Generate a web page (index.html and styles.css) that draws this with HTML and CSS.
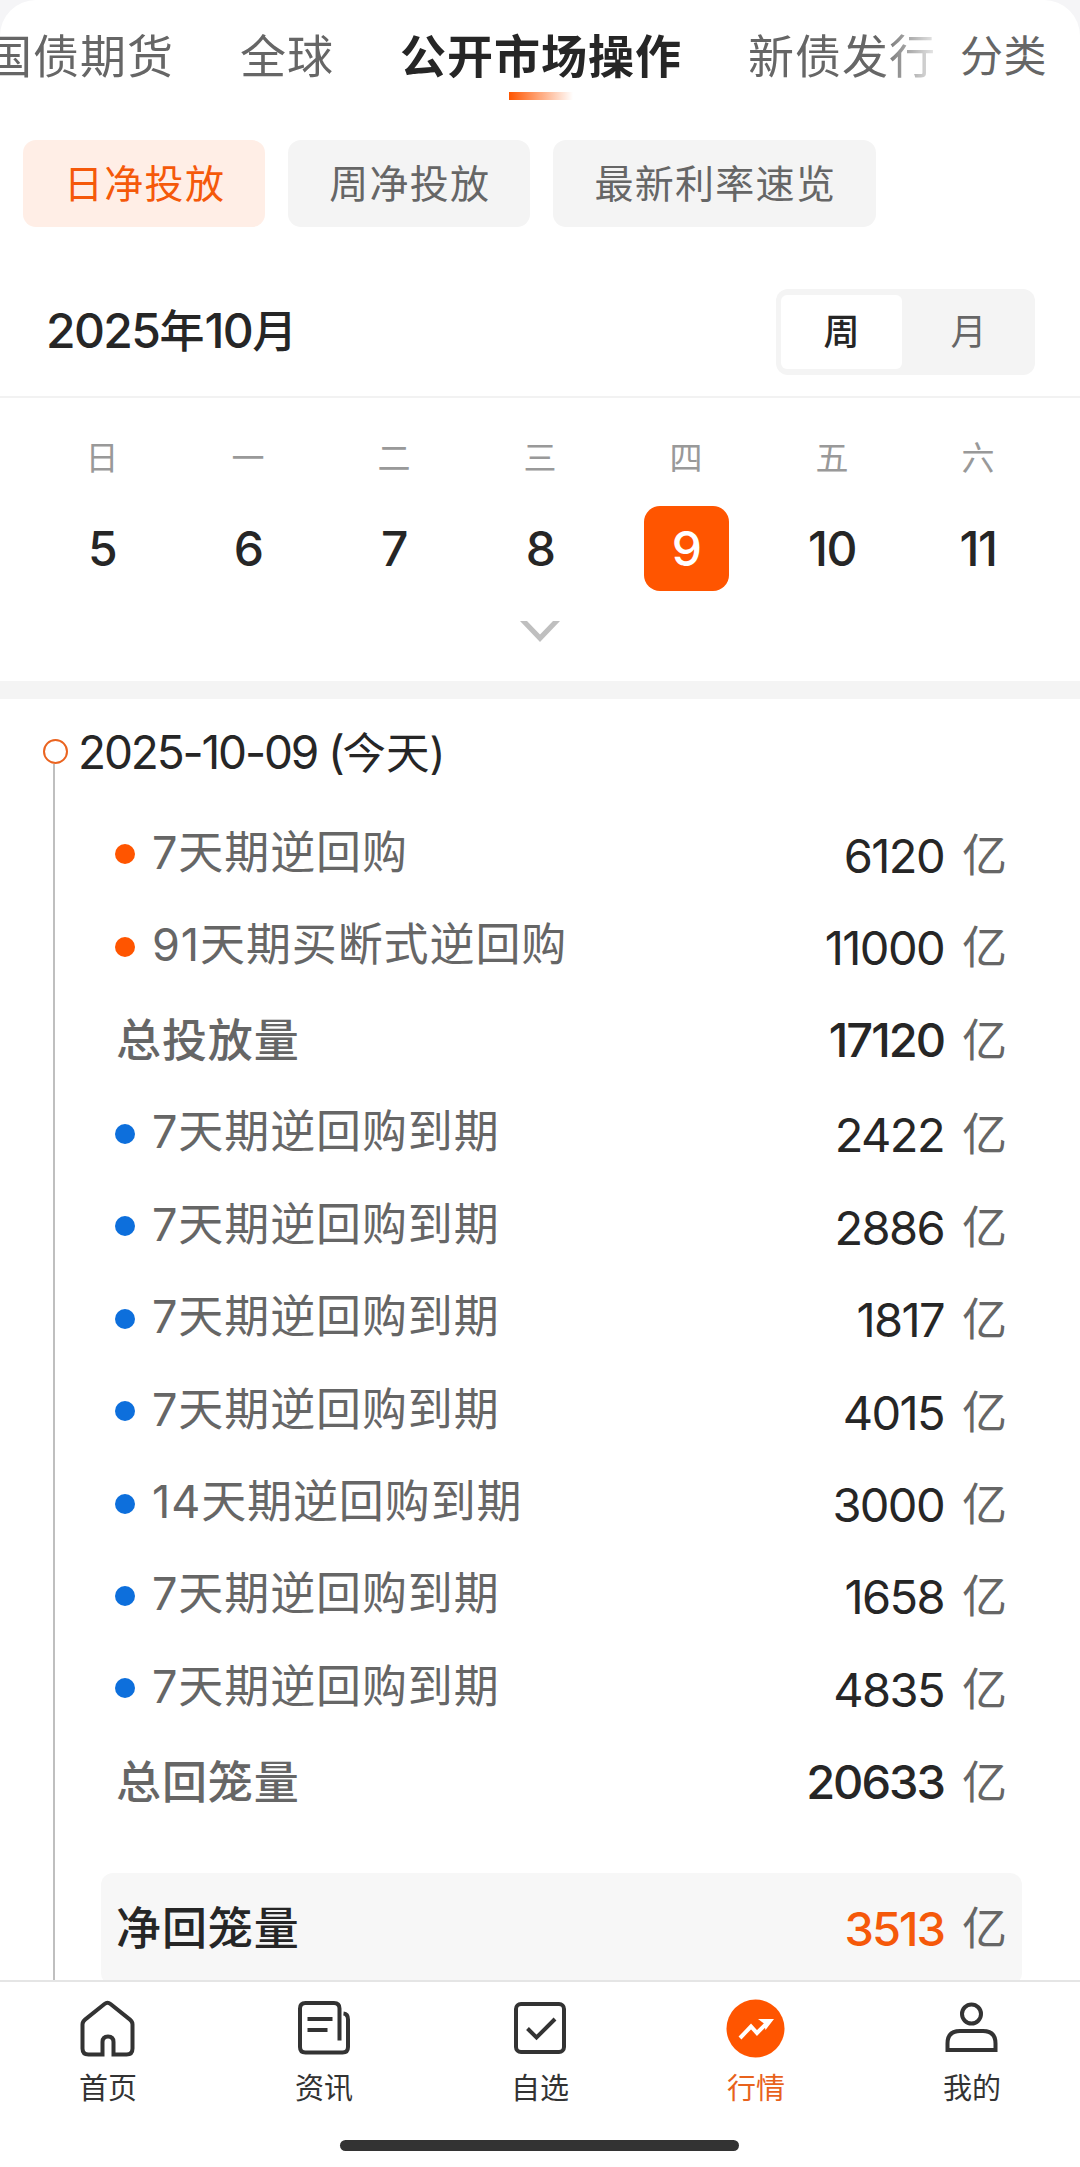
FILE: index.html
```html
<!DOCTYPE html>
<html lang="zh-CN">
<head>
<meta charset="utf-8">
<title>公开市场操作</title>
<link rel="stylesheet" href="styles.css">
</head>
<body>
<div class="app">
  <header class="tabs">
    <nav class="tabs-scroll">
      <span class="tab">国债期货</span>
      <span class="tab">全球</span>
      <span class="tab tab-active">公开市场操作</span>
      <span class="tab">新债发行</span>
    </nav>
    <span class="tab-category">分类</span>
  </header>

  <div class="chips">
    <span class="chip chip-active">日净投放</span>
    <span class="chip">周净投放</span>
    <span class="chip">最新利率速览</span>
  </div>

  <section class="calendar">
    <div class="cal-head">
      <h1 class="cal-title"><span class="n">2025</span>年<span class="n">10</span>月</h1>
      <div class="toggle"><span class="toggle-item toggle-on">周</span><span class="toggle-item">月</span></div>
    </div>
    <div class="week">
      <span class="wd">日</span><span class="wd">一</span><span class="wd">二</span><span class="wd">三</span><span class="wd">四</span><span class="wd">五</span><span class="wd">六</span>
      <span class="day">5</span><span class="day">6</span><span class="day">7</span><span class="day">8</span><span class="day day-on">9</span><span class="day">10</span><span class="day">11</span>
    </div>
    <svg class="chevron" viewBox="0 0 40 22"><path d="M0 0H7L20 13.500 33 0H40L20 21z" fill="#bfbfbf"/></svg>
  </section>

  <main class="timeline">
    <div class="rail"><i class="rail-dot"></i><i class="rail-line"></i></div>
    <div class="entry">
      <h2 class="date"><span class="n">2025-10-09 (</span>今天)</h2>
      <ul class="list">
        <li class="row"><i class="dot"></i><span class="label">7天期逆回购</span><b class="amount">6120</b><span class="unit">亿</span></li>
        <li class="row"><i class="dot"></i><span class="label">91天期买断式逆回购</span><b class="amount">11000</b><span class="unit">亿</span></li>
        <li class="row total"><span class="label">总投放量</span><b class="amount">17120</b><span class="unit">亿</span></li>
        <li class="row due"><i class="dot"></i><span class="label">7天期逆回购到期</span><b class="amount">2422</b><span class="unit">亿</span></li>
        <li class="row due"><i class="dot"></i><span class="label">7天期逆回购到期</span><b class="amount">2886</b><span class="unit">亿</span></li>
        <li class="row due"><i class="dot"></i><span class="label">7天期逆回购到期</span><b class="amount">1817</b><span class="unit">亿</span></li>
        <li class="row due"><i class="dot"></i><span class="label">7天期逆回购到期</span><b class="amount">4015</b><span class="unit">亿</span></li>
        <li class="row due"><i class="dot"></i><span class="label">14天期逆回购到期</span><b class="amount">3000</b><span class="unit">亿</span></li>
        <li class="row due"><i class="dot"></i><span class="label">7天期逆回购到期</span><b class="amount">1658</b><span class="unit">亿</span></li>
        <li class="row due"><i class="dot"></i><span class="label">7天期逆回购到期</span><b class="amount">4835</b><span class="unit">亿</span></li>
        <li class="row total"><span class="label">总回笼量</span><b class="amount">20633</b><span class="unit">亿</span></li>
        <li class="row total net"><span class="label">净回笼量</span><b class="amount">3513</b><span class="unit">亿</span></li>
      </ul>
    </div>
  </main>

  <footer class="bottom">
    <nav class="nav">
      <a class="nav-item">
        <svg class="icon" viewBox="0 0 60 60" fill="none" stroke="#333" stroke-width="4"><path d="M26.500 5Q29.500 2.500 32.500 5L52 20.600Q54.500 22.600 54.500 25.500V49.500Q54.500 55.500 48.500 55.500H35.500V43Q35.500 37.500 30 37.500T24.500 43V55.500H10.500Q4.500 55.500 4.500 49.500V25.500Q4.500 22.600 7 20.600Z"/></svg>
        <span>首页</span>
      </a>
      <a class="nav-item">
        <svg class="icon" viewBox="0 0 60 60" fill="none" stroke="#333" stroke-width="4"><path d="M45.500 41.500V9.500Q45.500 4 40 4H11.500Q6 4 6 9.500V48Q6 53.500 11.500 53.500H48.500Q54 53.500 54 48V20.500Q54 15 49.500 14.500M13.500 20H38.500M13.500 31H33.500"/></svg>
        <span>资讯</span>
      </a>
      <a class="nav-item">
        <svg class="icon" viewBox="0 0 60 60" fill="none" stroke="#333" stroke-width="4"><rect x="6" y="5" width="48" height="48" rx="5"/><path d="M17.500 29.500L26.500 38.500 45 20"/></svg>
        <span>自选</span>
      </a>
      <a class="nav-item nav-on">
        <svg class="icon" viewBox="0 0 60 60"><circle cx="29.500" cy="29.500" r="29" fill="#ff5500"/><path d="M14 39L25 27.500 31 34 41 24" fill="none" stroke="#fff" stroke-width="4"/><path d="M32 20H48L39.500 31 38 24.500z" fill="#fff"/></svg>
        <span>行情</span>
      </a>
      <a class="nav-item">
        <svg class="icon" viewBox="0 0 60 60" fill="none" stroke="#333" stroke-width="4"><circle cx="29.500" cy="15" r="9.500"/><path d="M5.500 51V44.500Q5.500 32 18 32H41Q53.500 32 53.500 44.500V51Z"/></svg>
        <span>我的</span>
      </a>
    </nav>
    <div class="home-bar"></div>
  </footer>
</div>
</body>
</html>
```
FILE: styles.css
```css
* { box-sizing: border-box; margin: 0; padding: 0; }

body {
  background: #f5f5f7;
  font-family: Inter, "Noto Sans CJK SC", sans-serif;
  color: #262626;
}

.app {
  width: 1080px;
  height: 2167px;
  display: flex;
  flex-direction: column;
  overflow: hidden;
  background: #fff;
  border-radius: 36px 36px 0 0;
}

/* top tabs */
.tabs {
  display: flex;
  align-items: flex-start;
  height: 140px;
  flex: none;
}
.tabs-scroll {
  display: flex;
  justify-content: flex-end;
  gap: 66px;
  width: 936px;
  height: 140px;
  overflow: hidden;
  -webkit-mask-image: linear-gradient(to right, #000 880px, transparent 945px);
  mask-image: linear-gradient(to right, #000 880px, transparent 945px);
}
.tab {
  flex: none;
  font-size: 46px;
  line-height: 113px;
  letter-spacing: 1px;
  color: #666;
  white-space: nowrap;
}
.tab-active {
  display: flex;
  flex-direction: column;
  align-items: center;
  font-weight: 700;
  color: #262626;
}
.tab-active::after {
  content: "";
  width: 64px;
  height: 8px;
  margin-top: -21px;
  background: linear-gradient(to right, #ff5500, rgba(255, 85, 0, 0));
}
.tab-category {
  margin-left: 24px;
  font-size: 43px;
  line-height: 112px;
  letter-spacing: 0.5px;
  color: #666;
}

.chips {
  display: flex;
  gap: 23px;
  padding-left: 23px;
  flex: none;
}
.chip {
  height: 87px;
  padding: 0 40px 0 41px;
  border-radius: 13px;
  background: #f4f4f4;
  font-size: 39px;
  line-height: 87px;
  letter-spacing: 1.3px;
  color: #666;
}
.chip-active { background: #ffeee6; color: #f5590a; }

/* calendar */
.calendar {
  display: flex;
  flex-direction: column;
  align-items: center;
  height: 472px;
  flex: none;
  border-bottom: 18px solid #f4f4f4;
}
.cal-head {
  display: flex;
  align-items: center;
  justify-content: space-between;
  width: 1080px;
  height: 171px;
  padding: 40px 45px 0 46px;
  border-bottom: 2px solid #f2f2f2;
}
.cal-title {
  font-size: 45px;
  line-height: 80px;
  font-weight: 500;
}
.cal-title .n { font-size: 48px; letter-spacing: -1.6px; }
.toggle {
  display: flex;
  width: 259px;
  height: 86px;
  padding: 6px 5px;
  border-radius: 12px;
  background: #f4f4f4;
}
.toggle-item {
  width: 121px;
  flex: none;
  border-radius: 6px;
  text-align: center;
  font-size: 36px;
  line-height: 74px;
  color: #666;
}
.toggle-item + .toggle-item { margin-left: 6px; }
.toggle-on { background: #fff; color: #262626; font-weight: 500; }
.week {
  display: grid;
  grid-template-columns: repeat(7, 146px);
  grid-template-rows: 108px 85px;
  justify-items: center;
}
.wd { font-size: 33px; line-height: 121px; color: #999; }
.day {
  width: 85px;
  height: 85px;
  border-radius: 16px;
  text-align: center;
  font-size: 48px;
  line-height: 85px;
  font-weight: 500;
  letter-spacing: -1.5px;
}
.day-on { background: #ff5500; color: #fff; }
.chevron { width: 40px; height: 22px; margin-top: 30px; }

/* timeline */
.timeline {
  display: flex;
  height: 1281px;
  flex: none;
  overflow: hidden;
}
.rail {
  width: 78px;
  flex: none;
  display: flex;
  flex-direction: column;
  padding: 40px 0 0 43px;
}
.rail-dot {
  width: 25px;
  height: 25px;
  flex: none;
  border: 2px solid #ea6420;
  border-radius: 50%;
}
.rail-line { width: 2px; flex: 1; margin-left: 10px; background: #bfbfbf; }
.entry { flex: 1; }
.date {
  height: 109px;
  font-size: 43.500px;
  line-height: 106px;
  font-weight: 400;
  white-space: nowrap;
}
.date .n { font-size: 46px; letter-spacing: -2.15px; }
.list { list-style: none; }
.row {
  display: flex;
  align-items: center;
  height: 92.4px;
  margin: 0 58px 0 23px;
  padding: 0 15px 0 14px;
  font-size: 45px;
  line-height: 60px;
}
.dot {
  width: 20px;
  height: 20px;
  flex: none;
  margin-right: 17px;
  border-radius: 50%;
  background: #ff5500;
}
.due .dot { background: #0d6fdc; }
.label { flex: 1; margin-top: -3px; letter-spacing: 0.9px; color: #666; white-space: nowrap; }
.amount { font-size: 47px; font-weight: 400; letter-spacing: -1.6px; margin-top: 3px; }
.unit { margin-left: 18px; margin-top: 3px; color: #666; }
.total { height: 95px; padding-left: 15px; }
.total .label { font-weight: 500; margin-top: 2px; }
.total .amount { font-weight: 500; letter-spacing: -2px; margin-top: 0; }
.total .unit { margin-top: 1px; }
.net {
  height: 112px;
  margin-top: 43px;
  border-radius: 12px;
  background: #f7f7f7;
}
.net .label { color: #262626; margin-top: 0; }
.net .amount { color: #f5590a; }

/* bottom navigation */
.bottom {
  flex: 1;
  display: flex;
  flex-direction: column;
  align-items: center;
  border-top: 2px solid #e5e5e5;
  background: #fff;
}
.nav { display: flex; width: 1080px; height: 158px; padding-top: 17px; }
.nav-item {
  flex: 1;
  display: flex;
  flex-direction: column;
  align-items: center;
  font-size: 29px;
  line-height: 59px;
  color: #333;
}
.nav-on { color: #e8621c; }
.icon { width: 60px; height: 60px; }
.home-bar { width: 399px; height: 11px; margin-right: 2px; border-radius: 6px; background: #333; }
```
